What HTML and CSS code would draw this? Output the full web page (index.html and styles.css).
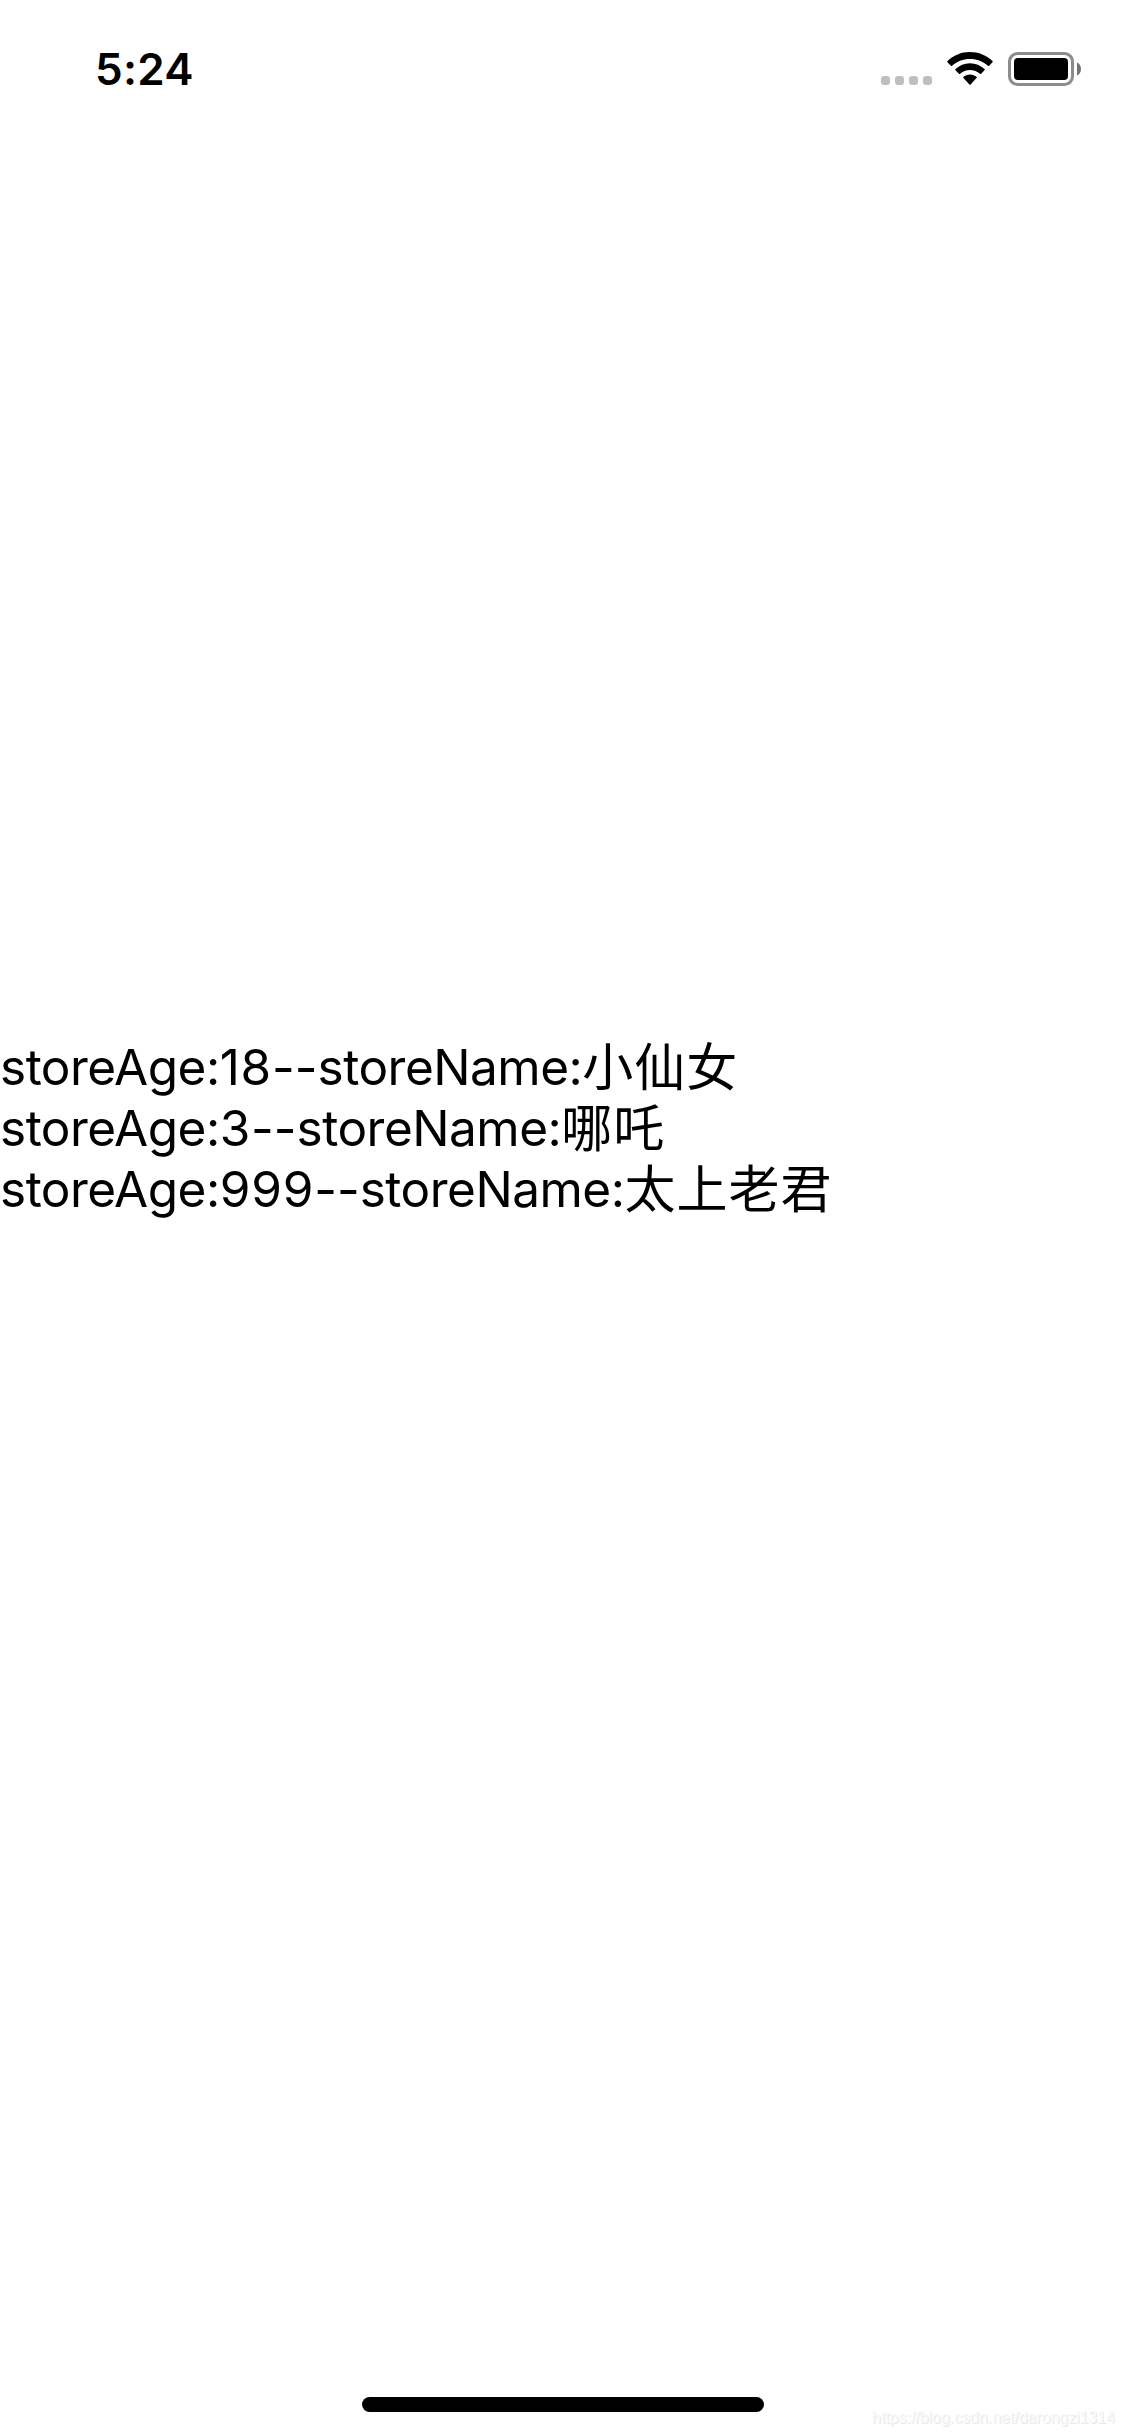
FILE: index.html
```html
<!DOCTYPE html>
<html lang="zh-CN">
<head>
    <meta charset="UTF-8">
    <meta name="viewport" content="width=device-width, initial-scale=1.0">
    <title>Store</title>
    <link rel="stylesheet" href="styles.css">
</head>
<body>

<header class="status-bar">
    <span class="time">5:24</span>
    <div class="status-icons">
        <svg class="signal" width="51" height="9" viewBox="0 0 51 9" fill="#bfbfbf">
            <rect x="0" width="9" height="9" rx="3"/>
            <rect x="14" width="9" height="9" rx="3"/>
            <rect x="28" width="9" height="9" rx="3"/>
            <rect x="42" width="9" height="9" rx="3"/>
        </svg>
        <svg class="wifi" width="46" height="33" viewBox="0 0 46 33">
            <path d="M23 0C14.300 0 6.300 3.400 0.500 9Q0 9.600 0.500 10.200L3.900 13.700Q4.500 14.200 5.100 13.700C9.800 9.300 16 6.900 23 6.900S36.200 9.300 40.900 13.700Q41.500 14.200 42.100 13.700L45.500 10.200Q46 9.600 45.500 9C39.700 3.400 31.700 0 23 0Z"/>
            <path d="M23 11.200C17.300 11.200 12.300 13.400 8.500 17Q7.900 17.600 8.500 18.200L11.900 21.700Q12.500 22.200 13.100 21.700C15.700 19.300 19.200 17.900 23 17.900S30.300 19.300 32.900 21.700Q33.500 22.200 34.100 21.700L37.500 18.200Q38.100 17.600 37.500 17C33.700 13.400 28.700 11.200 23 11.200Z"/>
            <path d="M23 22.400C20.500 22.400 18.200 23.300 16.500 24.800Q15.900 25.500 16.500 26.100L22.400 32.500Q23 33.100 23.600 32.500L29.500 26.100Q30.100 25.500 29.500 24.800C27.800 23.300 25.500 22.400 23 22.400Z"/>
        </svg>
        <svg class="battery" width="73" height="34" viewBox="0 0 73 34">
            <rect x="1.500" y="1.500" width="63" height="31" rx="8" fill="none" stroke="#8c8c8c" stroke-width="3"/>
            <rect x="6" y="6" width="54" height="22" rx="4"/>
            <path d="M69 10.500C71.500 11.500 73 14 73 17S71.500 22.500 69 23.500Z" fill="#737373"/>
        </svg>
    </div>
</header>

<main class="store-list">
    <div class="store"><span class="label">storeAge:</span><span class="age">18</span><span class="dash">--</span><span class="label">storeName:</span><span class="name">小仙女</span></div>
    <div class="store"><span class="label">storeAge:</span><span class="age">3</span><span class="dash">--</span><span class="label">storeName:</span><span class="name">哪吒</span></div>
    <div class="store"><span class="label">storeAge:</span><span class="age">999</span><span class="dash">--</span><span class="label">storeName:</span><span class="name">太上老君</span></div>
</main>

<footer class="bottom-bar">
    <div class="home-indicator"></div>
    <span class="watermark">https://blog.csdn.net/darongzi1314</span>
</footer>

</body>
</html>
```
FILE: styles.css
```css
body {
    font-family: 'Inter', 'Noto Sans CJK SC', sans-serif;
    background-color: #fff;
    color: #000;
    margin: 0;
    height: 2436px;
    display: flex;
    flex-direction: column;
    overflow: hidden;
}

.status-bar {
    display: flex;
    justify-content: space-between;
    height: 132px;
    padding: 0 44px 0 95px;
    box-sizing: border-box;
}

.time {
    font-size: 44px;
    font-weight: 560;
    line-height: 54px;
    padding-top: 42px;
    letter-spacing: 0.3px;
}

.status-icons {
    display: flex;
    align-items: flex-end;
    height: 34px;
    padding-top: 52px;
}

.signal {
    margin-bottom: 1px;
}

.wifi {
    margin: 0 15px 1px;
}

.store-list {
    flex: 1;
    padding-top: 905px;
}

.store {
    display: flex;
    height: 61px;
    font-size: 49.5px;
    line-height: 61px;
    white-space: nowrap;
}

.label {
    letter-spacing: -0.5px;
}

.age {
    letter-spacing: 0.8px;
}

.name {
    font-family: 'Noto Sans CJK SC', sans-serif;
    font-size: 51px;
    font-weight: 400;
    line-height: 55px;
    letter-spacing: 1px;
}

.bottom-bar {
    position: relative;
    display: flex;
    justify-content: center;
    height: 39px;
}

.home-indicator {
    width: 402px;
    height: 15px;
    border-radius: 8px;
    background-color: #000;
}

.watermark {
    position: absolute;
    right: 10px;
    bottom: 8px;
    font-family: 'Liberation Sans', sans-serif;
    font-size: 15.9px;
    line-height: 20px;
    color: #f9f9f9;
    text-shadow: 1px 1px 0 #e9e9e9;
}
```
